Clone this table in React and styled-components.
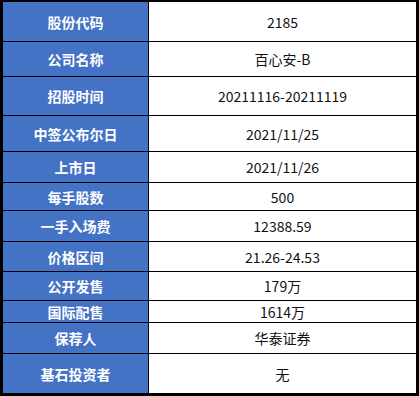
import React from 'react';
import styled, { createGlobalStyle } from 'styled-components';

const GlobalStyle = createGlobalStyle`
  html, body {
    margin: 0;
    padding: 0;
    background: #fff;
  }
`;

const Table = styled.div`
  width: 419px;
  box-sizing: border-box;
  border-top: 2px solid #000;
  border-left: 3px solid #000;
  border-right: 3px solid #000;
  border-bottom: 3px solid #000;
  font-family: "Noto Sans CJK SC", "Microsoft YaHei", sans-serif;
  font-size: 14px;
`;

const Row = styled.div`
  display: flex;
  height: ${(p) => p.$h}px;
  border-top: ${(p) => (p.$first ? 'none' : '1px solid #000')};
`;

const Label = styled.div`
  width: 145px;
  flex-shrink: 0;
  background: #4472c4;
  color: #fff;
  font-weight: bold;
  border-right: 1px solid #000;
  display: flex;
  align-items: center;
  justify-content: center;
`;

const Value = styled.div`
  flex: 1;
  color: #111;
  display: flex;
  align-items: center;
  justify-content: center;
`;

const rows = [
  ['股份代码', '2185', 39],
  ['公司名称', '百心安-B', 34],
  ['招股时间', '20211116-20211119', 38],
  ['中签公布尔日', '2021/11/25', 35],
  ['上市日', '2021/11/26', 30],
  ['每手股数', '500', 27],
  ['一手入场费', '12388.59', 30],
  ['价格区间', '21.26-24.53', 29],
  ['公开发售', '179万', 28],
  ['国际配售', '1614万', 21],
  ['保荐人', '华泰证券', 30],
  ['基石投资者', '无', 39],
];

const App = () => {
  return (
    <>
      <GlobalStyle />
      <Table>
        {rows.map(([label, value, h], i) => (
          <Row key={label} $h={h} $first={i === 0}>
            <Label>{label}</Label>
            <Value>{value}</Value>
          </Row>
        ))}
      </Table>
    </>
  );
};

export default App;
